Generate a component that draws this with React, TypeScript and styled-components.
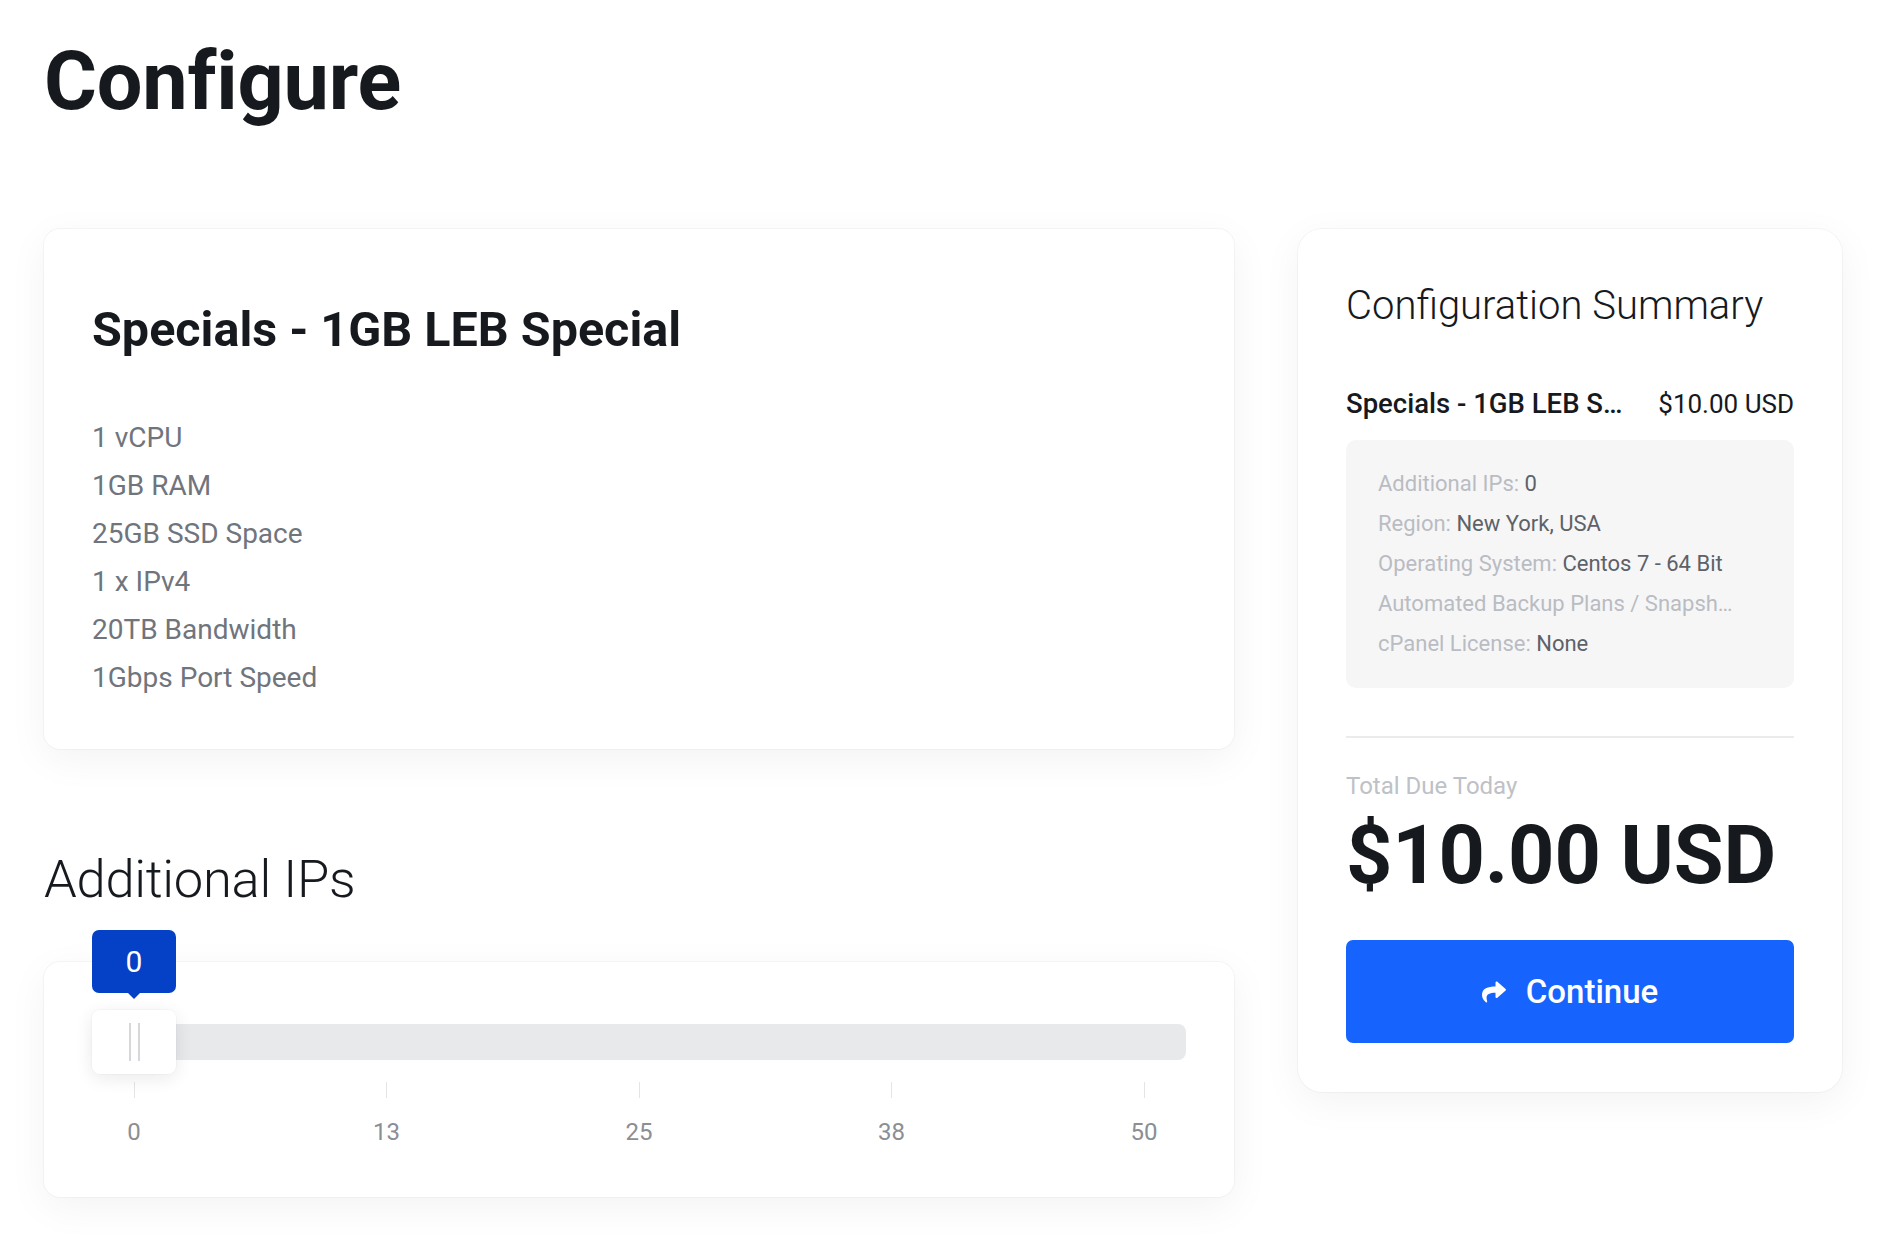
import React from "react";
import styled, { createGlobalStyle } from "styled-components";
import { FaShare } from "react-icons/fa";

const GlobalStyle = createGlobalStyle`
  html, body {
    margin: 0;
    padding: 0;
    background: #ffffff;
  }
  body {
    font-family: Roboto, "Liberation Sans", Arial, sans-serif;
    color: #16191d;
    -webkit-font-smoothing: antialiased;
  }
  * { box-sizing: border-box; }
`;

const Page = styled.div`
  padding: 34px 38px 40px 44px;
  width: 1880px;
`;

const PageTitle = styled.h1`
  margin: 0;
  font-size: 81px;
  line-height: 96px;
  font-weight: 700;
  color: #16191d;
  letter-spacing: -0.2px;
`;

const Layout = styled.div`
  display: grid;
  grid-template-columns: 1190px 544px;
  column-gap: 64px;
  align-items: start;
  margin-top: 99px;
`;

const Column = styled.div`
  display: flex;
  flex-direction: column;
`;

const Card = styled.section<{ $radius?: number }>`
  background: #ffffff;
  border-radius: ${(p) => p.$radius ?? 16}px;
  box-shadow: 0 0 0 1px rgba(20, 24, 30, 0.035), 0 10px 40px rgba(20, 24, 30, 0.05);
`;

const ProductCard = styled(Card)`
  padding: 72px 48px 47px;
`;

const ProductTitle = styled.h2`
  margin: 0;
  font-size: 48.5px;
  line-height: 58px;
  font-weight: 700;
  color: #16191d;
`;

const FeatureList = styled.ul`
  list-style: none;
  margin: 55px 0 0;
  padding: 0;
`;

const Feature = styled.li`
  font-size: 28px;
  line-height: 48px;
  font-weight: 400;
  color: #70757d;
`;

const SectionTitle = styled.h3`
  margin: 98px 0 0;
  font-size: 52.5px;
  line-height: 64px;
  font-weight: 300;
  color: #16191d;
  letter-spacing: -0.3px;
`;

const SliderCard = styled(Card)`
  margin-top: 51px;
  padding: 48px 48px 51px;
`;

const SliderRow = styled.div`
  position: relative;
  height: 64px;
  display: flex;
  align-items: center;
`;

const Track = styled.div`
  width: 100%;
  height: 36px;
  border-radius: 8px;
  background: #e8e9eb;
`;

const Thumb = styled.div<{ $ratio: number }>`
  position: absolute;
  top: 0;
  left: calc((100% - 84px) * ${(p) => p.$ratio});
  width: 84px;
  height: 64px;
  border-radius: 8px;
  background: #ffffff;
  box-shadow: 0 4px 18px rgba(20, 24, 30, 0.09), 0 0 0 1px rgba(20, 24, 30, 0.02);
  display: flex;
  align-items: center;
  justify-content: center;
`;

const Grip = styled.span`
  display: block;
  width: 11px;
  height: 38px;
  border-left: 2px solid #d6d7da;
  border-right: 2px solid #d6d7da;
`;

const Tooltip = styled.div`
  position: absolute;
  left: 0;
  bottom: calc(100% + 17px);
  width: 84px;
  height: 63px;
  border-radius: 7px;
  background: #0541c6;
  color: #ffffff;
  font-size: 30px;
  line-height: 63px;
  text-align: center;
  font-weight: 400;

  &::after {
    content: "";
    position: absolute;
    left: 50%;
    top: 100%;
    margin-left: -6px;
    border-left: 6px solid transparent;
    border-right: 6px solid transparent;
    border-top: 6px solid #0541c6;
  }
`;

const TickRow = styled.div`
  display: flex;
  justify-content: space-between;
  padding: 0 42px;
  margin-top: 8px;
`;

const Tick = styled.div`
  width: 0;
  display: flex;
  flex-direction: column;
  align-items: center;
`;

const TickLine = styled.span`
  display: block;
  width: 1px;
  height: 16px;
  background: #e4e5e7;
`;

const TickLabel = styled.span`
  margin-top: 20px;
  font-size: 24px;
  line-height: 28px;
  color: #8b8e94;
  white-space: nowrap;
`;

const SummaryCard = styled(Card)`
  padding: 55px 48px 49px;
`;

const SummaryTitle = styled.h2`
  margin: 0;
  font-size: 40px;
  line-height: 44px;
  font-weight: 300;
  color: #16191d;
`;

const LineItem = styled.div`
  margin-top: 60px;
  display: flex;
  align-items: center;
  gap: 30px;
  line-height: 32px;
`;

const LineName = styled.span`
  flex: 1;
  min-width: 0;
  font-size: 27.5px;
  font-weight: 500;
  color: #16191d;
  white-space: nowrap;
  overflow: hidden;
  text-overflow: ellipsis;
`;

const LinePrice = styled.span`
  flex: none;
  font-size: 26px;
  font-weight: 400;
  color: #16191d;
`;

const OptionBox = styled.div`
  margin-top: 20px;
  padding: 24px 58px 24px 32px;
  border-radius: 10px;
  background: #f6f6f7;
`;

const OptionRow = styled.div`
  font-size: 22px;
  line-height: 40px;
  white-space: nowrap;
  overflow: hidden;
  text-overflow: ellipsis;
  color: #b9bcc2;
`;

const OptionValue = styled.span`
  color: #5d6168;
`;

const Divider = styled.hr`
  margin: 48px 0 0;
  border: 0;
  height: 2px;
  background: #ebebed;
`;

const TotalLabel = styled.div`
  margin-top: 34px;
  font-size: 24px;
  line-height: 28px;
  color: #bec1c6;
`;

const TotalAmount = styled.div`
  margin-top: 11px;
  font-size: 81px;
  line-height: 90px;
  font-weight: 700;
  color: #16191d;
  letter-spacing: -0.2px;
`;

const ContinueButton = styled.button`
  margin-top: 39px;
  width: 100%;
  height: 103px;
  border: 0;
  border-radius: 7px;
  background: #1664fd;
  color: #ffffff;
  display: flex;
  align-items: center;
  justify-content: center;
  gap: 20px;
  font-family: inherit;
  font-size: 33px;
  font-weight: 500;
  cursor: pointer;

  svg {
    width: 24px;
    height: 24px;
  }
`;

const features = [
  "1 vCPU",
  "1GB RAM",
  "25GB SSD Space",
  "1 x IPv4",
  "20TB Bandwidth",
  "1Gbps Port Speed",
];

const options: { label: string; value?: string }[] = [
  { label: "Additional IPs: ", value: "0" },
  { label: "Region: ", value: "New York, USA" },
  { label: "Operating System: ", value: "Centos 7 - 64 Bit" },
  { label: "Automated Backup Plans / Snapshots: ", value: "None" },
  { label: "cPanel License: ", value: "None" },
];

const ticks = [0, 13, 25, 38, 50];
const sliderValue = 0;
const sliderMax = 50;

export default function App() {
  return (
    <>
      <GlobalStyle />
      <Page>
        <PageTitle>Configure</PageTitle>
        <Layout>
          <Column>
            <ProductCard>
              <ProductTitle>Specials - 1GB LEB Special</ProductTitle>
              <FeatureList>
                {features.map((f) => (
                  <Feature key={f}>{f}</Feature>
                ))}
              </FeatureList>
            </ProductCard>

            <SectionTitle>Additional IPs</SectionTitle>
            <SliderCard>
              <SliderRow>
                <Track />
                <Thumb $ratio={sliderValue / sliderMax}>
                  <Grip />
                  <Tooltip>{sliderValue}</Tooltip>
                </Thumb>
              </SliderRow>
              <TickRow>
                {ticks.map((t) => (
                  <Tick key={t}>
                    <TickLine />
                    <TickLabel>{t}</TickLabel>
                  </Tick>
                ))}
              </TickRow>
            </SliderCard>
          </Column>

          <SummaryCard $radius={24}>
            <SummaryTitle>Configuration Summary</SummaryTitle>
            <LineItem>
              <LineName>Specials - 1GB LEB Special</LineName>
              <LinePrice>$10.00 USD</LinePrice>
            </LineItem>
            <OptionBox>
              {options.map((o) => (
                <OptionRow key={o.label}>
                  {o.label}
                  {o.value && <OptionValue>{o.value}</OptionValue>}
                </OptionRow>
              ))}
            </OptionBox>
            <Divider />
            <TotalLabel>Total Due Today</TotalLabel>
            <TotalAmount>$10.00 USD</TotalAmount>
            <ContinueButton type="button">
              <FaShare />
              Continue
            </ContinueButton>
          </SummaryCard>
        </Layout>
      </Page>
    </>
  );
}
